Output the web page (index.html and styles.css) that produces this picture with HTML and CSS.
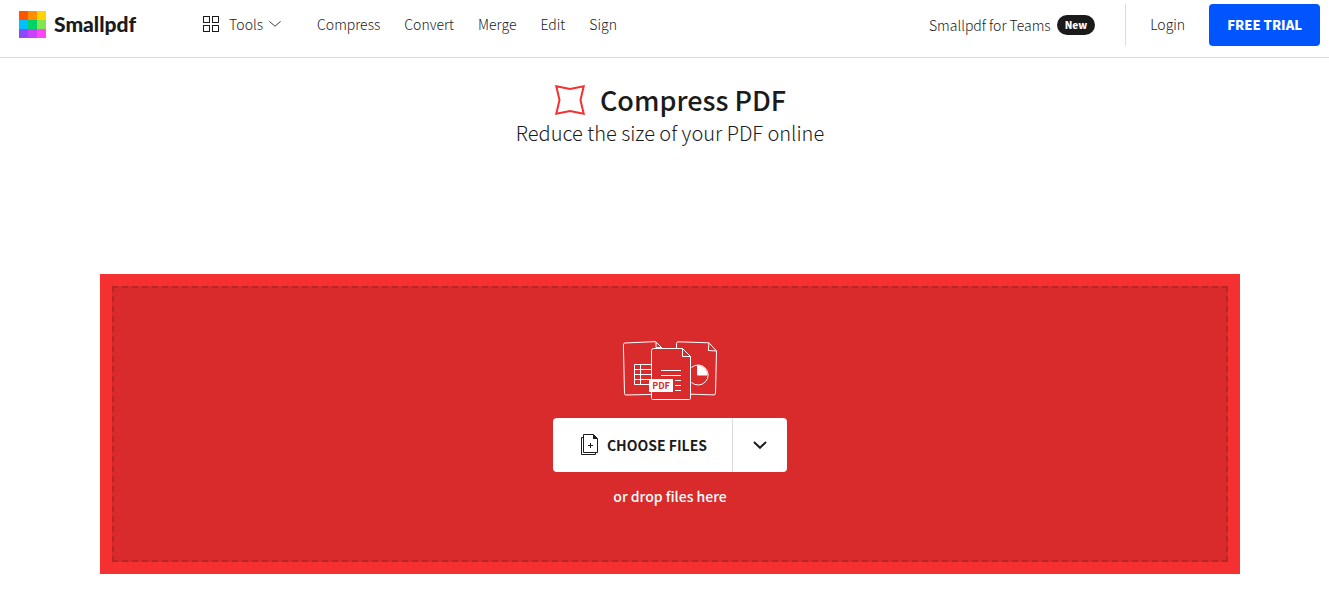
FILE: index.html
```html
<!DOCTYPE html>
<html lang="en">
<head>
    <meta charset="UTF-8">
    <meta name="viewport" content="width=device-width, initial-scale=1.0">
    <title>Compress PDF</title>
    <link rel="stylesheet" href="styles.css">
</head>
<body>
    <header class="header">
        <a class="logo" href="#">
            <svg width="27" height="27" viewBox="0 0 27 27" shape-rendering="crispEdges" aria-hidden="true">
                <rect width="9" height="9" fill="#ff5500"/>
                <rect x="9" width="9" height="9" fill="#ff8e00"/>
                <rect x="18" width="9" height="9" fill="#ffd200"/>
                <rect y="9" width="9" height="9" fill="#00c0ff"/>
                <rect x="9" y="9" width="9" height="9" fill="#00d267"/>
                <rect x="18" y="9" width="9" height="9" fill="#81e650"/>
                <rect y="18" width="9" height="9" fill="#8b48fe"/>
                <rect x="9" y="18" width="9" height="9" fill="#ca41fc"/>
                <rect x="18" y="18" width="9" height="9" fill="#ff46fb"/>
            </svg>
            <span>Smallpdf</span>
        </a>
        <nav class="nav">
            <button class="tools" type="button">
                <svg width="16" height="16" viewBox="0 0 16 16" fill="none" stroke="#1b1b1b" aria-hidden="true">
                    <rect x=".5" y=".5" width="6" height="6"/>
                    <rect x="9.5" y=".5" width="6" height="6"/>
                    <rect x=".5" y="9.5" width="6" height="6"/>
                    <rect x="9.5" y="9.5" width="6" height="6"/>
                </svg>
                <span>Tools</span>
                <svg width="12" height="6" viewBox="0 0 12 6" fill="none" stroke="#3c3c3c" aria-hidden="true">
                    <path d="M.4.4 6 5.2 11.6.4"/>
                </svg>
            </button>
            <a href="#">Compress</a>
            <a href="#">Convert</a>
            <a href="#">Merge</a>
            <a href="#">Edit</a>
            <a href="#">Sign</a>
        </nav>
        <div class="account">
            <a class="teams" href="#">Smallpdf for Teams <span class="badge">New</span></a>
            <a class="login" href="#">Login</a>
            <button class="trial" type="button">FREE TRIAL</button>
        </div>
    </header>

    <main class="main">
        <div class="title">
            <svg width="32" height="32" viewBox="0 0 32 32" fill="none" stroke="#f43030" stroke-width="2" aria-hidden="true">
                <path d="M2.300 2.300 16 5l13.700-2.700L26.500 16l3.200 13.700L16 27 2.300 29.700 5.500 16z"/>
            </svg>
            <h1>Compress PDF</h1>
        </div>
        <p class="subtitle">Reduce the size of your PDF online</p>

        <section class="panel">
            <div class="drop">
                <svg class="files" width="96" height="60" viewBox="0 0 96 60" fill="none" stroke="#fff" aria-hidden="true">
                    <!-- sheet -->
                    <path d="M29.500 53.400 4 54Q2.600 54 2.500 52.500L1.400 4Q1.400 2.100 3 2L33.500.6 40.500 7.500"/>
                    <path d="M34 1v5.500h5"/>
                    <path d="M30 23.500H12.500v20H28M12.500 28.500H30M12.500 33.500H30M12.500 38.500H30M18.500 23.500v20"/>
                    <!-- chart -->
                    <path d="M54.500 7V2.500Q54.500.8 56 .8L87 1.800 94.500 10 93.500 52Q93.400 54 92 53.900L69 53.200"/>
                    <path d="M87 1.800 86.300 9.500 94.500 10"/>
                    <path d="M69.500 26.500a10 10 0 1 1 0 15"/>
                    <path d="M75.500 24.500V34H85A9.500 9.500 0 0 0 75.500 24.500z" fill="#fff"/>
                    <!-- pdf -->
                    <path d="M31.500 7.500H60.500L68.500 15.500V57.500Q68.500 58.500 67.500 58.500H30.500Q29.500 58.500 29.500 57.500V9.500Q29.500 7.500 31.500 7.500z" fill="#d92b2b"/>
                    <path d="M60.500 7.500v8h8M39 29.500H59M39 34.500H59M53 39.500H59M53 44.500H59M53 49.500H59"/>
                    <rect x="27" y="38" width="24" height="13" fill="#fff" stroke="none"/>
                    <text x="39" y="48" text-anchor="middle">PDF</text>
                </svg>
                <div class="choose">
                    <button class="choose-files" type="button">
                        <svg width="18" height="22" viewBox="0 0 18 22" fill="none" stroke="#1b1b1b" aria-hidden="true">
                            <path d="M2.500 3.500h-2v17h14v-2M2.500.5H12.500L16.500 4.500V18.500H2.500z"/>
                            <path d="M12 .5V5H17z" fill="#1b1b1b" stroke="none"/>
                            <path d="M9.500 9v5M7 11.500h5"/>
                        </svg>
                        <span>CHOOSE FILES</span>
                    </button>
                    <button class="choose-more" type="button" aria-label="More sources">
                        <svg width="14" height="8" viewBox="0 0 14 8" fill="none" stroke="#1b1b1b" stroke-width="2" aria-hidden="true">
                            <path d="M1 1 7 6.800 13 1"/>
                        </svg>
                    </button>
                </div>
                <p class="hint">or drop files here</p>
            </div>
        </section>
    </main>
</body>
</html>
```
FILE: styles.css
```css
*{
    margin: 0;
    padding: 0;
    box-sizing: border-box;
}
body {
    font-family: "Noto Sans CJK SC", "Open Sans", sans-serif;
    font-size: 14px;
    line-height: 20px;
    color: #1b1b1b;
    background-color: #fff;
}
a {
    color: inherit;
    text-decoration: none;
}
button {
    border: 0;
    background: none;
    color: inherit;
    font: inherit;
    cursor: pointer;
}

/* header */
.header {
    display: flex;
    align-items: center;
    padding: 4px 9px 11px 19px;
    border-bottom: 1px solid #dcdcdc;
}
.logo {
    display: flex;
    align-items: center;
    gap: 8px;
    padding-bottom: 2px;
    font-family: Lato, sans-serif;
    font-size: 21px;
    font-weight: 900;
}
.nav {
    display: flex;
    align-items: center;
    gap: 24px;
    margin-left: 67px;
    padding-bottom: 2px;
    font-weight: 300;
}
.tools {
    display: flex;
    align-items: center;
    gap: 6px;
    margin-right: 12px;
}
.tools span {
    margin-left: 4px;
}
.account {
    display: flex;
    align-items: center;
    margin-left: auto;
    font-weight: 300;
}
.teams {
    display: flex;
    align-items: center;
    gap: 6px;
    margin-right: 30px;
    padding-bottom: 1px;
}
.badge {
    padding: 0 8px;
    border-radius: 10px;
    background-color: #1b1b1b;
    color: #fff;
    font-size: 10px;
    font-weight: 900;
}
.login {
    padding: 0 24px 2px;
    border-left: 1px solid #dcdcdc;
    line-height: 40px;
}
.trial {
    height: 42px;
    padding: 0 18px;
    border-radius: 4px;
    background-color: #0055ff;
    color: #fff;
    font-size: 13px;
    font-weight: 900;
}

/* content */
.main {
    padding: 23px 9px 23px 20px;
    text-align: center;
}
.title {
    display: flex;
    align-items: center;
    justify-content: center;
    gap: 14px;
}
h1 {
    font-size: 27px;
    line-height: 38px;
    font-weight: 500;
}
.subtitle {
    font-size: 20px;
    line-height: 28px;
    font-weight: 300;
}
.panel {
    max-width: 1140px;
    margin: 127px auto 0;
    padding: 12px;
    background-color: #f43030;
}
.drop {
    display: flex;
    flex-direction: column;
    align-items: center;
    min-height: 276px;
    padding-top: 53px;
    border: 2px dashed #b92525;
    background-color: #d92b2b;
}
.files text {
    fill: #d92b2b;
    stroke: none;
    font-size: 9px;
    font-weight: 700;
}
.choose {
    display: flex;
    height: 54px;
    margin-top: 17px;
    border-radius: 4px;
    background-color: #fff;
}
.choose-files {
    display: flex;
    align-items: center;
    gap: 8px;
    padding: 0 25px 0 28px;
    font-weight: 700;
}
.choose-more {
    display: flex;
    align-items: center;
    justify-content: center;
    width: 55px;
    border-left: 1px solid #dcdcdc;
}
.hint {
    margin-top: 14px;
    color: #fff;
    font-weight: 500;
}
```
